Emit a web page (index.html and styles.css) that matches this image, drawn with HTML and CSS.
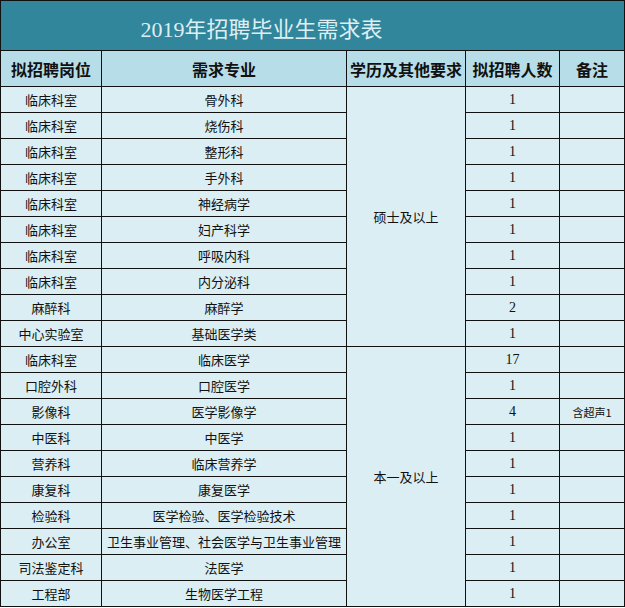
FILE: index.html
```html
<!DOCTYPE html>
<html lang="zh">
<head>
<meta charset="utf-8">
<link rel="stylesheet" href="styles.css">
</head>
<body>
<table class="tbl">
  <colgroup>
    <col class="c1"><col class="c2"><col class="c3"><col class="c4"><col class="c5">
  </colgroup>
  <tr class="title-row"><td colspan="5" class="title">2019年招聘毕业生需求表</td></tr>
  <tr class="head">
    <th>拟招聘岗位</th><th>需求专业</th><th>学历及其他要求</th><th>拟招聘人数</th><th>备注</th>
  </tr>
  <tr><td>临床科室</td><td>骨外科</td><td rowspan="10" class="edu">硕士及以上</td><td class="num">1</td><td></td></tr>
  <tr><td>临床科室</td><td>烧伤科</td><td class="num">1</td><td></td></tr>
  <tr><td>临床科室</td><td>整形科</td><td class="num">1</td><td></td></tr>
  <tr><td>临床科室</td><td>手外科</td><td class="num">1</td><td></td></tr>
  <tr><td>临床科室</td><td>神经病学</td><td class="num">1</td><td></td></tr>
  <tr><td>临床科室</td><td>妇产科学</td><td class="num">1</td><td></td></tr>
  <tr><td>临床科室</td><td>呼吸内科</td><td class="num">1</td><td></td></tr>
  <tr><td>临床科室</td><td>内分泌科</td><td class="num">1</td><td></td></tr>
  <tr><td>麻醉科</td><td>麻醉学</td><td class="num">2</td><td></td></tr>
  <tr><td>中心实验室</td><td>基础医学类</td><td class="num">1</td><td></td></tr>
  <tr><td>临床科室</td><td>临床医学</td><td rowspan="10" class="edu">本一及以上</td><td class="num">17</td><td></td></tr>
  <tr><td>口腔外科</td><td>口腔医学</td><td class="num">1</td><td></td></tr>
  <tr><td>影像科</td><td>医学影像学</td><td class="num">4</td><td class="note">含超声1</td></tr>
  <tr><td>中医科</td><td>中医学</td><td class="num">1</td><td></td></tr>
  <tr><td>营养科</td><td>临床营养学</td><td class="num">1</td><td></td></tr>
  <tr><td>康复科</td><td>康复医学</td><td class="num">1</td><td></td></tr>
  <tr><td>检验科</td><td>医学检验、医学检验技术</td><td class="num">1</td><td></td></tr>
  <tr><td>办公室</td><td>卫生事业管理、社会医学与卫生事业管理</td><td class="num">1</td><td></td></tr>
  <tr><td>司法鉴定科</td><td>法医学</td><td class="num">1</td><td></td></tr>
  <tr><td>工程部</td><td>生物医学工程</td><td class="num">1</td><td></td></tr>
</table>
</body>
</html>
```
FILE: styles.css
```css
html, body {
  margin: 0;
  padding: 0;
  background: #ffffff;
}
.tbl {
  border-collapse: collapse;
  table-layout: fixed;
  width: 624px;
  font-family: "Noto Sans CJK SC", sans-serif;
  color: #111;
}
.c1 { width: 101px; }
.c2 { width: 245px; }
.c3 { width: 119px; }
.c4 { width: 94px; }
.c5 { width: 65px; }
.tbl td, .tbl th {
  border: 1px solid #111;
  padding: 0;
  text-align: center;
  vertical-align: middle;
  background: #daeef3;
  height: 25px;
  font-size: 13px;
  line-height: 16px;
  white-space: nowrap;
  overflow: hidden;
}
.tbl td.title {
  height: 50px;
  box-sizing: border-box;
  padding: 8px 102px 0 0;
  background: #31869b;
  color: #ddeff4;
  font-family: "Liberation Serif", "Noto Sans CJK SC", serif;
  font-size: 22px;
  line-height: 28px;
}
.head th {
  height: 35px;
  background: #b7dee8;
  font-size: 16px;
  font-weight: bold;
  color: #111;
}
.tbl td.num {
  font-family: "Liberation Serif", serif;
  font-size: 14px;
}
.tbl td.note {
  font-size: 11px;
}
.tbl td.edu {
  font-size: 13px;
}
```
